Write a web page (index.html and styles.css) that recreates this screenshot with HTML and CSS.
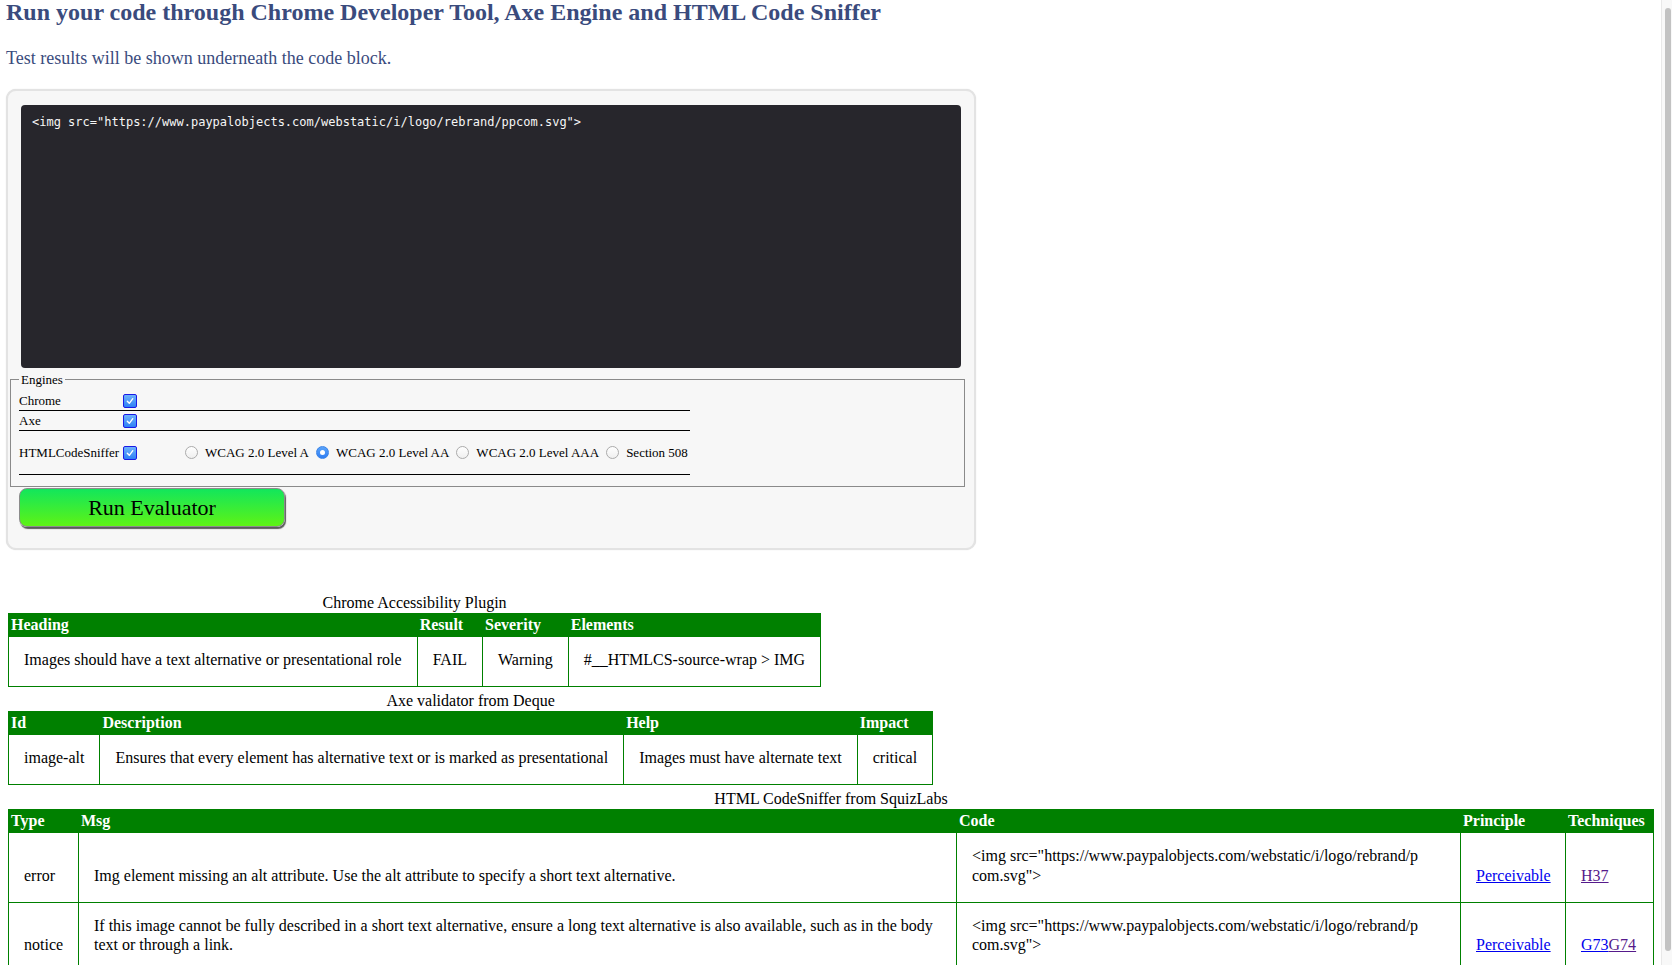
FILE: index.html
```html
<!DOCTYPE html>
<html lang="en">
<head>
<meta charset="utf-8">
<title>Accessibility Evaluator</title>
<link rel="stylesheet" href="styles.css">
</head>
<body>
<div class="page">
  <h1 class="title">Run your code through Chrome Developer Tool, Axe Engine and HTML Code Sniffer</h1>
  <p class="lead">Test results will be shown underneath the code block.</p>

  <div class="panel">
    <pre class="code">&lt;img src="https://www.paypalobjects.com/webstatic/i/logo/rebrand/ppcom.svg"&gt;</pre>
    <fieldset class="engines">
      <legend class="engines-legend">Engines</legend>
      <div class="engine-list">
        <div class="engine-row">
          <span class="engine-name">Chrome</span>
          <span class="check"><svg viewBox="0 0 10 10" width="10" height="10"><path d="M2.3 5.2 L4.3 7.3 L7.8 2.7" fill="none" stroke="#fff" stroke-width="1.4" stroke-linecap="round" stroke-linejoin="round"/></svg></span>
        </div>
        <div class="engine-row">
          <span class="engine-name">Axe</span>
          <span class="check"><svg viewBox="0 0 10 10" width="10" height="10"><path d="M2.3 5.2 L4.3 7.3 L7.8 2.7" fill="none" stroke="#fff" stroke-width="1.4" stroke-linecap="round" stroke-linejoin="round"/></svg></span>
        </div>
        <div class="engine-row tall">
          <span class="engine-name">HTMLCodeSniffer</span>
          <span class="check"><svg viewBox="0 0 10 10" width="10" height="10"><path d="M2.3 5.2 L4.3 7.3 L7.8 2.7" fill="none" stroke="#fff" stroke-width="1.4" stroke-linecap="round" stroke-linejoin="round"/></svg></span>
          <div class="levels">
            <span class="level"><span class="radio"></span>WCAG 2.0 Level A</span>
            <span class="level"><span class="radio on"></span>WCAG 2.0 Level AA</span>
            <span class="level"><span class="radio"></span>WCAG 2.0 Level AAA</span>
            <span class="level"><span class="radio"></span>Section 508</span>
          </div>
        </div>
      </div>
    </fieldset>
    <button class="run" type="button">Run Evaluator</button>
  </div>

  <div class="results">
    <table class="result-table">
      <caption>Chrome Accessibility Plugin</caption>
      <thead>
        <tr><th>Heading</th><th>Result</th><th>Severity</th><th>Elements</th></tr>
      </thead>
      <tbody>
        <tr><td>Images should have a text alternative or presentational role</td><td>FAIL</td><td>Warning</td><td>#__HTMLCS-source-wrap &gt; IMG</td></tr>
      </tbody>
    </table>

    <table class="result-table">
      <caption>Axe validator from Deque</caption>
      <thead>
        <tr><th>Id</th><th>Description</th><th>Help</th><th>Impact</th></tr>
      </thead>
      <tbody>
        <tr><td>image-alt</td><td>Ensures that every element has alternative text or is marked as presentational</td><td>Images must have alternate text</td><td>critical</td></tr>
      </tbody>
    </table>

    <table class="result-table wide">
      <caption>HTML CodeSniffer from SquizLabs</caption>
      <colgroup>
        <col class="c-type"><col class="c-msg"><col class="c-code"><col class="c-principle"><col class="c-tech">
      </colgroup>
      <thead>
        <tr><th>Type</th><th>Msg</th><th>Code</th><th>Principle</th><th>Techniques</th></tr>
      </thead>
      <tbody>
        <tr>
          <td>error</td>
          <td>Img element missing an alt attribute. Use the alt attribute to specify a short text alternative.</td>
          <td>&lt;img src="https://www.paypalobjects.com/webstatic/i/logo/rebrand/p<br>com.svg"&gt;</td>
          <td><a class="link" href="#">Perceivable</a></td>
          <td><a class="link visited" href="#">H37</a></td>
        </tr>
        <tr>
          <td>notice</td>
          <td>If this image cannot be fully described in a short text alternative, ensure a long text alternative is also available, such as in the body text or through a link.</td>
          <td>&lt;img src="https://www.paypalobjects.com/webstatic/i/logo/rebrand/p<br>com.svg"&gt;</td>
          <td><a class="link" href="#">Perceivable</a></td>
          <td><a class="link" href="#">G73</a><a class="link visited" href="#">G74</a></td>
        </tr>
      </tbody>
    </table>
  </div>
</div>
<div class="scrollbar"><div class="thumb"></div></div>
</body>
</html>
```
FILE: styles.css
```css
html {
  overflow: hidden;
}

body {
  margin: 0;
  background: #fff;
  color: #000;
  font-family: "Liberation Serif", "Times New Roman", serif;
}

.page {
  padding: 0 19px 0 8px;
}

.title {
  margin: -2px 0 0 -2px;
  font-size: 24px;
  line-height: 28px;
  font-weight: bold;
  color: #3a4b7d;
}

.lead {
  margin: 22px 0 0 -2px;
  font-size: 18px;
  line-height: 21px;
  color: #3a4b7d;
}

.panel {
  box-sizing: border-box;
  width: 970px;
  margin: 20px 0 0 -2px;
  padding: 14px 13px 21px;
  background: #f7f7f7;
  border: 2px solid #e3e3e3;
  border-radius: 10px;
  box-shadow: 0 0 1px #d0d0d0;
}

.code {
  box-sizing: border-box;
  height: 263px;
  margin: 0;
  padding: 10px 11px;
  background: #27262c;
  border-radius: 4px;
  color: #f6f6f6;
  font-family: "DejaVu Sans Mono", "Liberation Mono", monospace;
  font-size: 12px;
  line-height: 15px;
  white-space: pre;
}

.engines {
  margin: 4px -4px 0 -11px;
  padding: 4px 0 11px 8px;
  border: 1px solid #8a8a8a;
  min-width: 0;
}

.engines-legend {
  padding: 0 2px;
  font-size: 13px;
  line-height: 15px;
}

.engine-list {
  width: 671px;
}

.engine-row {
  display: flex;
  align-items: center;
  height: 19px;
  border-bottom: 1px solid #000;
  font-size: 13px;
}

.engine-row.tall {
  height: 43px;
}

.engine-name {
  width: 104px;
  flex: none;
}

.check {
  box-sizing: border-box;
  width: 14px;
  height: 14px;
  flex: none;
  display: flex;
  align-items: center;
  justify-content: center;
  border: 1.5px solid #1a1ae6;
  border-radius: 2px;
  background: linear-gradient(#6db2fb, #2f80f5);
}

.check svg {
  display: block;
}

.levels {
  display: flex;
  align-items: center;
  margin-left: 48px;
}

.level {
  display: flex;
  align-items: center;
  margin-right: 7px;
}

.level:last-child {
  margin-right: 0;
}

.radio {
  box-sizing: border-box;
  width: 13px;
  height: 13px;
  margin-right: 7px;
  border: 1px solid #ababab;
  border-radius: 50%;
  background: linear-gradient(#ffffff, #efefef);
  position: relative;
}

.radio.on {
  border-color: #3a83e6;
  background: linear-gradient(#5aa3fa, #2f7ef3);
}

.radio.on::after {
  content: "";
  position: absolute;
  left: 50%;
  top: 50%;
  width: 5px;
  height: 5px;
  margin: -2.5px 0 0 -2.5px;
  border-radius: 50%;
  background: #fff;
}

.run {
  display: block;
  box-sizing: border-box;
  width: 266px;
  height: 39px;
  margin: 1px 0 0 -2px;
  padding: 0;
  border: 1px solid #8c8c8c;
  border-radius: 8px;
  background: linear-gradient(#12e65c, #5ef315);
  box-shadow: 1px 2px 1px #5a5a5a;
  color: #000;
  font-family: "Liberation Serif", "Times New Roman", serif;
  font-size: 22px;
}

.results {
  margin-top: 43px;
}

.result-table {
  border-collapse: collapse;
  margin-bottom: 4px;
  font-size: 16px;
}

.result-table caption {
  line-height: 19px;
  padding-bottom: 0.5px;
}

.result-table th {
  padding: 2px;
  border: 1px solid #008000;
  background: #008000;
  color: #fff;
  font-weight: bold;
  line-height: 18.5px;
  text-align: left;
}

.result-table td {
  padding: 13px 15px 16.5px;
  border: 1px solid #008000;
  line-height: 19.5px;
  text-align: left;
  vertical-align: bottom;
}

.wide {
  width: 100%;
  table-layout: fixed;
}

.c-type { width: 70px; }
.c-msg { width: 878px; }
.c-code { width: 504px; }
.c-principle { width: 105px; }
.c-tech { width: 88px; }

.link {
  color: #0000ee;
  text-decoration: underline;
}

.link.visited {
  color: #551a8b;
}

.scrollbar {
  position: fixed;
  top: 0;
  right: 0;
  bottom: 0;
  width: 10px;
  background: #f8f8f8;
  border-left: 1px solid #e8e8e8;
}

.thumb {
  position: absolute;
  top: 8px;
  bottom: 14px;
  left: 3px;
  width: 6px;
  border-radius: 3px;
  background: #c2c2c2;
}
```
